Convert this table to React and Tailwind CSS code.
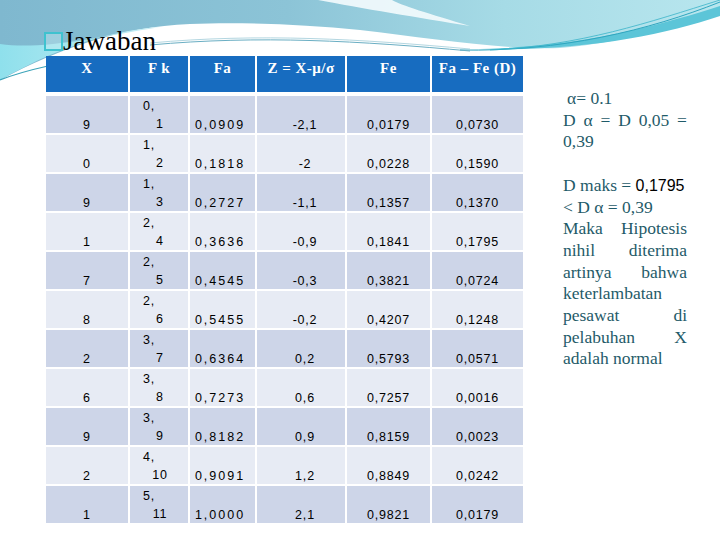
import React from 'react'

const headers = ['X', 'F k', 'Fa', 'Z = X-μ/σ', 'Fe', 'Fa – Fe (D)']

const rows = [
  ['9', '0,', '1', '0,0909', '-2,1', '0,0179', '0,0730'],
  ['0', '1,', '2', '0,1818', '-2', '0,0228', '0,1590'],
  ['9', '1,', '3', '0,2727', '-1,1', '0,1357', '0,1370'],
  ['1', '2,', '4', '0,3636', '-0,9', '0,1841', '0,1795'],
  ['7', '2,', '5', '0,4545', '-0,3', '0,3821', '0,0724'],
  ['8', '2,', '6', '0,5455', '-0,2', '0,4207', '0,1248'],
  ['2', '3,', '7', '0,6364', '0,2', '0,5793', '0,0571'],
  ['6', '3,', '8', '0,7273', '0,6', '0,7257', '0,0016'],
  ['9', '3,', '9', '0,8182', '0,9', '0,8159', '0,0023'],
  ['2', '4,', '10', '0,9091', '1,2', '0,8849', '0,0242'],
  ['1', '5,', '11', '1,0000', '2,1', '0,9821', '0,0179'],
]

const cols = 'grid grid-cols-[82px_58px_65px_88px_83px_91px] gap-x-[2px]'

// justified line: words spread across the column
const Spread = ({ words }) => (
  <div className="flex justify-between">
    {words.map((w, i) => <span key={i}>{w}</span>)}
  </div>
)

const Waves = () => (
  <svg className="absolute top-0 left-0" width="720" height="120" viewBox="0 0 720 120">
    <defs>
      <linearGradient id="sky" x1="0" y1="0" x2="1" y2="0">
        <stop offset="0" stopColor="#7fb8cf" />
        <stop offset="0.4" stopColor="#8cc4d7" />
        <stop offset="0.7" stopColor="#a6dbe6" />
        <stop offset="1" stopColor="#b8e6ee" />
      </linearGradient>
      <linearGradient id="cyan" x1="0" y1="0" x2="1" y2="0">
        <stop offset="0" stopColor="#8fe0ec" />
        <stop offset="1" stopColor="#c7eef4" />
      </linearGradient>
    </defs>
    <path d="M0 0 H720 V8 C690 22 630 42 560 48 C500 50 430 38 360 30 C300 24 240 22 190 24 C120 27 60 48 0 80 Z" fill="url(#sky)" />
    <path d="M0 44 C40 50 95 38 160 27 C100 32 50 52 0 80 Z" fill="url(#cyan)" />
    <path d="M318 0 C360 8 420 18 470 26 C430 14 400 5 392 0 Z" fill="#f4fbfd" opacity="0.9" />
    <path d="M470 49 C580 48 660 25 720 6 V16 C660 36 580 52 470 49 Z" fill="#5cc5d8" />
    <path d="M460 50 C560 52 650 30 720 2" stroke="#2fa6bf" strokeWidth="1" fill="none" />
    <path d="M490 50 C580 46 650 22 720 0" stroke="#3ab4c9" strokeWidth="0.8" fill="none" />
    <path d="M150 45 C260 35 360 41 470 51" stroke="#6aaec3" strokeWidth="1" fill="none" />
    <path d="M150 43 C260 33 360 39 470 49" stroke="#9fcbd8" strokeWidth="0.8" fill="none" />
    <path d="M0 80 C15 74 30 70 48 66" stroke="#3ba3b8" strokeWidth="1.2" fill="none" />
  </svg>
)

export default function App() {
  return (
    <div className="relative w-[720px] h-[540px] bg-white overflow-hidden">
      <Waves />
      <div className="relative pl-[44px] pt-[29px]">
        {/* title */}
        <div className="flex items-start h-[24px]">
          <div className="w-[19px] h-[19px] border-2 border-[#3fc2cf] bg-[#c9eef3]/40 mt-[3px]" />
          <span className="text-[27px] leading-[24px] text-black font-['Liberation_Serif',serif]">Jawaban</span>
        </div>

        <div className="flex mt-[3px]">
          {/* table */}
          <div className="ml-[2px] font-['Liberation_Sans',sans-serif] text-[12.5px] text-black">
            <div className={cols}>
              {headers.map((h) => (
                <div key={h} className="h-[36px] bg-[#176cc0] text-white text-center pt-[3px] leading-[18px] text-[15px] font-bold tracking-[0.5px] font-['Liberation_Serif',serif]">
                  {h}
                </div>
              ))}
            </div>
            <div className={`${cols} gap-y-[2px] mt-[4px]`}>
              {rows.map((r, i) => {
                const bg = i % 2 === 0 ? 'bg-[#cdd5e8]' : 'bg-[#e7ebf4]'
                const cell = `h-[37px] ${bg} flex items-end justify-center leading-[16px] tracking-[0.8px]`
                return (
                  <React.Fragment key={i}>
                    <div className={cell}>{r[0]}</div>
                    <div className={`h-[37px] ${bg} flex flex-col justify-end leading-[18px] tracking-[0.8px]`}>
                      <span className="pl-[13px]">{r[1]}</span>
                      <span className="text-center pl-[2px]">{r[2]}</span>
                    </div>
                    <div className={`${cell} tracking-[2px] pr-[5px]`}>{r[3]}</div>
                    <div className={`${cell} pl-[8px]`}>{r[4]}</div>
                    <div className={cell}>{r[5]}</div>
                    <div className={cell}>{r[6]}</div>
                  </React.Fragment>
                )
              })}
            </div>
          </div>

          {/* conclusion */}
          <div className="ml-[40px] mt-[32px] w-[124px] text-[17.5px] leading-[21.7px] text-[#1f5b69] font-['Liberation_Serif',serif]">
            <div className="pl-[4px]">α= 0.1</div>
            <Spread words={['D', 'α', '=', 'D', '0,05', '=']} />
            <div>0,39</div>
            <div className="h-[21.7px]" />
            <div className="whitespace-nowrap">
              D maks = <span className="text-black text-[16px] font-['Liberation_Sans',sans-serif]">0,1795</span>
            </div>
            <div>&lt; D α = 0,39</div>
            <Spread words={['Maka', 'Hipotesis']} />
            <Spread words={['nihil', 'diterima']} />
            <Spread words={['artinya', 'bahwa']} />
            <div>keterlambatan</div>
            <Spread words={['pesawat', 'di']} />
            <Spread words={['pelabuhan', 'X']} />
            <div>adalah normal</div>
          </div>
        </div>
      </div>
    </div>
  )
}
